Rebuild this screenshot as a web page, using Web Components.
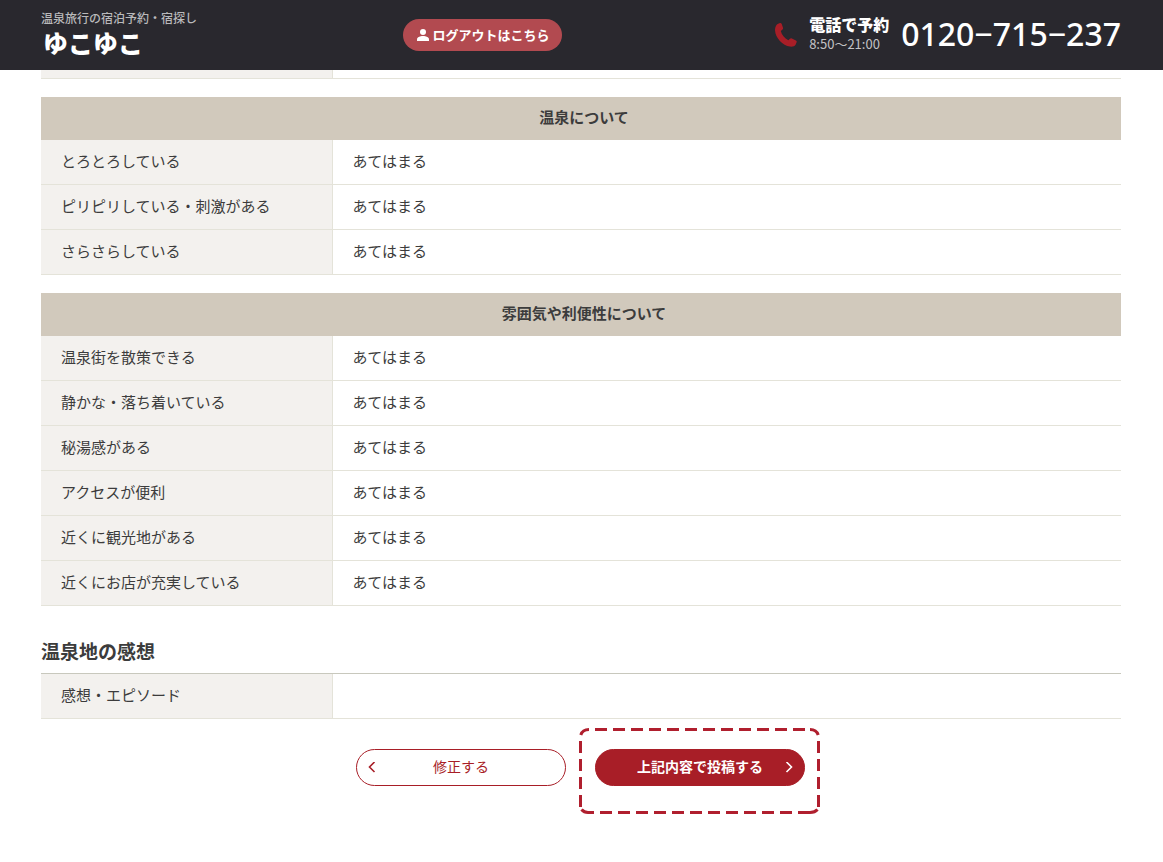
<!DOCTYPE html>
<html lang="ja">
<head>
<meta charset="utf-8">
<meta name="viewport" content="width=device-width, initial-scale=1">
<title>ゆこゆこ</title>
<style>
body { margin: 0; background: #fff; color: #3c3c3c; font-family: "Noto Sans CJK JP", sans-serif; font-size: 15px; line-height: 24px; }
</style>
</head>
<body>
<review-page></review-page>

<script>
const define = (name, markup, setup) => {
  customElements.define(name, class extends HTMLElement {
    constructor() {
      super();
      this.attachShadow({ mode: 'open' }).innerHTML = markup;
    }
    connectedCallback() { if (setup) setup(this, this.shadowRoot); }
  });
};

define('site-brand', `
<style>
:host { display: block; width: 148px; }
a { display: flex; flex-direction: column; color: #fff; text-decoration: none; white-space: nowrap; }
small { font-size: 12px; line-height: 16px; font-weight: 500; color: #b9b9bb; }
strong { font-size: 25px; line-height: 32px; font-weight: 900; padding-left: 2px; }
</style>
<a href="#"><small>温泉旅行の宿泊予約・宿探し</small><strong>ゆこゆこ</strong></a>`);

define('logout-button', `
<style>
:host { display: block; }
button { display: flex; align-items: center; justify-content: center; gap: 4px; height: 32px; padding: 0 12px 0 14px; border: 0; border-radius: 16px; background: #b24a50; color: #fff; font: 700 13px/20px "Noto Sans CJK JP", sans-serif; white-space: nowrap; cursor: pointer; }
svg { display: block; }
</style>
<button type="button"><svg width="12" height="12" viewBox="0 0 12 12" fill="#fff" aria-hidden="true"><circle cx="6" cy="3" r="3"/><path d="M0 12V10.500C0 8.300 3 7.100 6 7.100S12 8.300 12 10.500V12Z"/></svg><slot></slot></button>`);

define('phone-contact', `
<style>
:host { display: flex; align-items: center; }
svg { display: block; margin-right: 12px; }
.hours { display: flex; flex-direction: column; margin-right: 12px; }
b { font-size: 16px; line-height: 20px; font-weight: 900; }
small { font-size: 13px; line-height: 20px; color: #c3c3c5; }
a { color: #fff; text-decoration: none; font: 500 32px/40px "Noto Sans", sans-serif; white-space: nowrap; padding-bottom: 2px; }
.hours { padding-bottom: 2px; }
</style>
<svg width="22" height="24" viewBox="0 0 22 24" fill="#a81e27" aria-hidden="true"><path d="M3.200.700 5 .100Q6.200-.200 6.700 1L8 4.700Q8.300 5.700 7.500 6.400L5.800 7.900C6.600 11.700 9.500 15.300 13.400 17.300L14.900 15.800Q15.800 14.900 16.900 15.400L20.900 17.400Q22.100 18.100 21.600 19.300L20.700 21.400C19.900 23 17.600 23.900 15 23.600C7.700 22.700.400 15.100 0 7.300C-.100 4.300 1.200 1.500 3.200.700Z"/></svg>
<div class="hours"><b>電話で予約</b><small>8:50～21:00</small></div>
<a href="tel:0120715237">0120−715−237</a>`);

define('site-header', `
<style>
:host { display: block; position: sticky; top: 0; z-index: 2; background: #29282e; color: #fff; }
header { display: flex; align-items: center; justify-content: space-between; min-height: 70px; padding: 0 42px 0 41px; box-sizing: border-box; }
site-brand { padding-bottom: 2px; }
</style>
<header><site-brand></site-brand><logout-button>ログアウトはこちら</logout-button><phone-contact></phone-contact></header>`);

define('review-table', `
<style>
:host { display: block; }
table { width: 100%; border-collapse: separate; border-spacing: 0; table-layout: fixed; }
th, td { box-sizing: border-box; height: 45px; padding: 0 20px 2px; text-align: left; font-weight: 400; border-bottom: 1px solid #e4e3d9; line-height: 24px; }
tbody th { width: 27%; background: #f3f1ee; border-right: 1px solid #e4e3d9; }
col.label { width: 27%; }
thead th { height: 43px; padding: 0 14px 4px 20px; border: 0; background: #d1c9bc; text-align: center; font-weight: 700; }
:host([ruled]) table { border-top: 1px solid #c8c8bd; }
:host([cut]) tbody th, :host([cut]) td { height: 9px; }
</style>
<table><colgroup><col class="label"><col></colgroup><thead><tr><th colspan="2" scope="colgroup"><slot></slot></th></tr></thead><tbody></tbody></table>`,
(host, root) => {
  if (!host.textContent.trim()) root.querySelector('thead').remove();
  const body = root.querySelector('tbody');
  body.replaceChildren();
  for (const label of (host.getAttribute('items') || '').split(',')) {
    const row = body.insertRow();
    const head = document.createElement('th');
    head.scope = 'row';
    head.textContent = label;
    row.append(head);
    row.insertCell().textContent = host.getAttribute('answer') || '';
  }
});

define('pill-button', `
<style>
:host { display: block; position: relative; }
button { display: grid; grid-template-columns: 14px 1fr 14px; align-items: center; width: 210px; height: 37px; padding: 0 8px; border: 1px solid #a81e27; border-radius: 19px; background: #fff; color: #a81e27; font: 400 14px/20px "Noto Sans CJK JP", sans-serif; cursor: pointer; }
:host([primary]) button { background: #a81e27; color: #fff; font-weight: 700; }
span { grid-column: 2; text-align: center; padding-bottom: 4px; }
svg { display: block; fill: none; stroke: currentColor; stroke-width: 1.6; }
.next, .mark { display: none; }
:host([primary]) .prev { display: none; }
:host([primary]) .next { display: block; grid-column: 3; }
:host([primary]) .mark { display: block; position: absolute; left: -16px; top: -21px; stroke: #b01f2e; stroke-width: 3; pointer-events: none; }
</style>
<button type="button"><svg class="prev" width="14" height="12" viewBox="0 0 14 12" aria-hidden="true"><path d="M9.500 0 4.500 5 9.500 10"/></svg><span><slot></slot></span><svg class="next" width="14" height="12" viewBox="0 0 14 12" aria-hidden="true"><path d="M4.500 0 9.500 5 4.500 10"/></svg></button>
<svg class="mark" width="241" height="86" viewBox="0 0 241 86" aria-hidden="true"><path stroke-dasharray="12 6" d="M16 1.500H227M1.500 13V79M239.500 13V79M21 84.500H214"/><path d="M1.800 7Q3.500 1.500 10 1.500M231 1.500Q237.500 1.500 239.200 7M2.500 81.500Q5 84.500 9 84.500H15M219 84.500H231Q236 84.500 238.500 81.500"/></svg>`);

define('review-page', `
<style>
:host { display: block; }
main { display: flex; flex-direction: column; gap: 18px; padding: 0 43px 48px 41px; }
review-table { margin-right: -1px; }
h2 { margin: 13px 0 -10px; font-size: 19px; line-height: 28px; font-weight: 700; }
.actions { display: flex; justify-content: center; gap: 29px; padding-top: 12px; }
</style>
<site-header></site-header>
<main>
<review-table cut></review-table>
<review-table answer="あてはまる" items="とろとろしている,ピリピリしている・刺激がある,さらさらしている">温泉について</review-table>
<review-table answer="あてはまる" items="温泉街を散策できる,静かな・落ち着いている,秘湯感がある,アクセスが便利,近くに観光地がある,近くにお店が充実している">雰囲気や利便性について</review-table>
<h2>温泉地の感想</h2>
<review-table ruled items="感想・エピソード"></review-table>
<div class="actions"><pill-button>修正する</pill-button><pill-button primary>上記内容で投稿する</pill-button></div>
</main>`);
</script>
</body>
</html>
